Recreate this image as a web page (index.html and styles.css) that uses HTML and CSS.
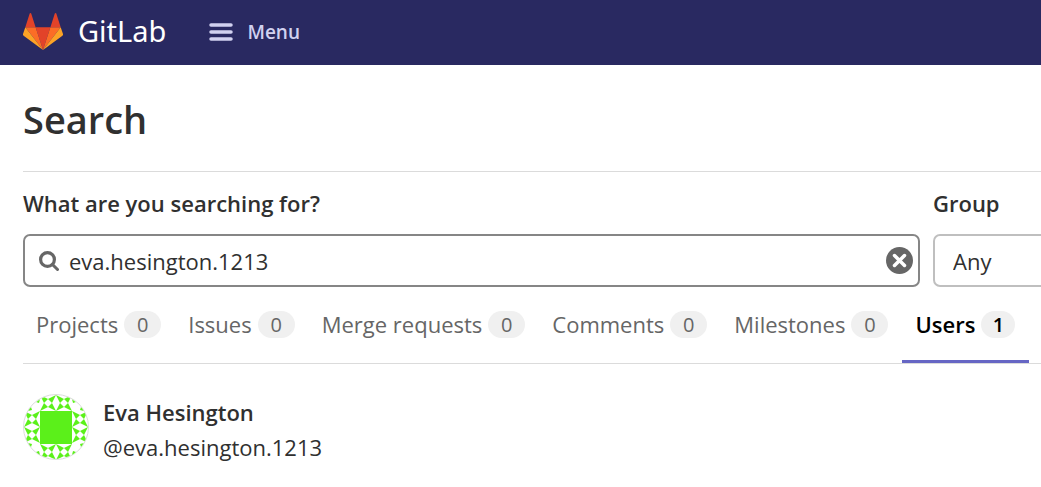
FILE: index.html
```html
<!DOCTYPE html>
<html lang="en">
<head>
<meta charset="utf-8">
<meta name="viewport" content="width=device-width, initial-scale=1">
<title>Search · GitLab</title>
<link rel="stylesheet" href="styles.css">
</head>
<body>
<header class="navbar">
  <a class="brand" href="#">
    <svg class="brand-logo" viewBox="0 0 40 37" aria-hidden="true">
      <path fill="#e24329" d="M20 37 27.400 14.200H12.600z"/>
      <path fill="#fc6d26" d="M20 37 12.600 14.200H2.300zM20 37 27.400 14.200H37.700z"/>
      <path fill="#fca326" d="M2.300 14.200 0 21.100a1.500 1.500 0 0 0 .6 1.700L20 37zM37.700 14.200 40 21.100a1.500 1.500 0 0 1-.6 1.700L20 37z"/>
      <path fill="#e24329" d="M2.300 14.200H12.600L8.200.6a.8.8 0 0 0-1.500 0zM37.700 14.200H27.400L31.800.6a.8.8 0 0 1 1.500 0z"/>
    </svg>
    <span class="brand-name">GitLab</span>
  </a>
  <button class="menu-button" type="button">
    <svg class="menu-icon" viewBox="0 0 24 18" aria-hidden="true">
      <path d="M2 2H22M2 9H22M2 16H22" stroke="currentColor" stroke-width="3.500" stroke-linecap="round"/>
    </svg>
    Menu
  </button>
</header>
<main class="content">
  <h1 class="page-title">Search</h1>
  <form class="search-form">
    <div class="field field-search">
      <label class="field-label" for="search">What are you searching for?</label>
      <div class="search-box">
        <svg class="search-icon" viewBox="0 0 20 20" aria-hidden="true">
          <circle cx="8.500" cy="8.500" r="6.900" fill="none" stroke="currentColor" stroke-width="3.200"/>
          <path d="m13.500 13.500 5 5" stroke="currentColor" stroke-width="3" stroke-linecap="round"/>
        </svg>
        <input class="search-input" id="search" type="text" value="eva.hesington.1213">
        <button class="clear-button" type="button" aria-label="Clear">
          <svg class="clear-icon" viewBox="0 0 27 27" aria-hidden="true">
            <circle cx="13.500" cy="13.500" r="13.500" fill="#666"/>
            <path d="m8.500 8.500 10 10m0-10-10 10" stroke="#fff" stroke-width="3.500" stroke-linecap="round"/>
          </svg>
        </button>
      </div>
    </div>
    <div class="field field-group">
      <label class="field-label" for="group">Group</label>
      <select class="group-select" id="group"><option>Any</option></select>
    </div>
  </form>
  <nav class="tabs" aria-label="Search results">
    <a class="tab" href="#">Projects <span class="badge">0</span></a>
    <a class="tab" href="#">Issues <span class="badge">0</span></a>
    <a class="tab" href="#">Merge requests <span class="badge">0</span></a>
    <a class="tab" href="#">Comments <span class="badge">0</span></a>
    <a class="tab" href="#">Milestones <span class="badge">0</span></a>
    <a class="tab tab-active" href="#" aria-current="page">Users <span class="badge">1</span></a>
  </nav>
  <section class="user">
    <svg class="avatar" viewBox="0 0 66 66" aria-hidden="true">
      <defs>
        <clipPath id="round"><circle cx="33" cy="33" r="32"/></clipPath>
        <path id="patch" d="M0 0 8 4 4 8zM16 0 12 8 8 4zM0 16 4 8 8 12zM16 16 8 12 12 8z"/>
      </defs>
      <circle cx="33" cy="33" r="32.500" fill="#fff" stroke="#dcdcdc"/>
      <g clip-path="url(#round)" fill="#5bf01a">
        <path d="M17 17h32v33H17z"/>
        <use href="#patch" x="17" y="1"/><use href="#patch" x="33" y="1"/>
        <use href="#patch" x="17" y="50"/><use href="#patch" x="33" y="50"/>
        <use href="#patch" x="1" y="17"/><use href="#patch" x="1" y="33"/>
        <use href="#patch" x="49" y="17"/><use href="#patch" x="49" y="33"/>
        <path id="spots" d="M13 5h4l-1 4-3-1zM5 13h3l1 3-4 1z"/>
        <use href="#spots" transform="matrix(-1 0 0 1 66 0)"/>
        <use href="#spots" transform="matrix(1 0 0 -1 0 66)"/>
        <use href="#spots" transform="matrix(-1 0 0 -1 66 66)"/>
      </g>
    </svg>
    <div class="user-info">
      <a class="user-name" href="#">Eva Hesington</a>
      <span class="user-handle">@eva.hesington.1213</span>
    </div>
  </section>
</main>
</body>
</html>
```
FILE: styles.css
```css
* { box-sizing: border-box; }
body {
  margin: 0;
  background: #fff;
  color: #303030;
  font: 22px/32px "Open Sans", "Noto Sans", sans-serif;
  overflow-x: hidden;
}
a { color: inherit; text-decoration: none; }
svg { display: block; flex: none; }
.navbar {
  display: flex;
  align-items: center;
  gap: 43px;
  height: 65px;
  padding: 0 23px 3px;
  background: #292961;
}
.brand { display: flex; align-items: center; gap: 15px; color: #fff; }
.brand-logo { width: 40px; height: 37px; }
.brand-name { font-size: 29px; font-family: "Noto Sans", sans-serif; }
.menu-button {
  display: flex;
  align-items: center;
  gap: 14px;
  padding: 2px 0 0;
  border: 0;
  background: none;
  color: #d1d1f0;
  font: 600 19px/32px "Open Sans", sans-serif;
}
.menu-icon { width: 24px; height: 18px; }
.content { padding-left: 23px; }
.page-title {
  margin: 0;
  padding: 28px 0 26px;
  border-bottom: 1px solid #dbdbdb;
  font-size: 38px;
  font-weight: 600;
  line-height: 52px;
}
.search-form { display: flex; gap: 13px; padding-top: 15px; }
.field { display: flex; flex-direction: column; gap: 15px; }
.field-search { flex: 1; }
.field-group { flex: 0 0 108px; overflow: hidden; }
.field-label { font-weight: 600; }
.search-box {
  display: flex;
  align-items: center;
  gap: 10px;
  height: 53px;
  padding: 0 5px 0 14px;
  border: 2px solid #868686;
  border-radius: 7px;
}
.search-icon { width: 20px; height: 20px; color: #666; }
.search-input {
  flex: 1;
  min-width: 0;
  padding: 0;
  border: 0;
  outline: 0;
  background: none;
  color: inherit;
  font: inherit;
}
.clear-button { padding: 0; border: 0; background: none; }
.clear-icon { width: 27px; height: 27px; }
.group-select {
  appearance: none;
  width: 240px;
  height: 53px;
  padding: 0 18px;
  border: 2px solid #bfbfbf;
  border-radius: 7px;
  background: #fff;
  color: inherit;
  font: inherit;
}
.tabs { display: flex; border-bottom: 1px solid #dbdbdb; }
.tab {
  display: flex;
  align-items: center;
  gap: 6px;
  height: 76px;
  padding: 1px 14px 0 13px;
  border-bottom: 3px solid transparent;
  color: #666;
  white-space: nowrap;
}
.tab-active {
  border-color: #6666c4;
  color: #000;
  font-weight: 600;
}
.badge {
  min-width: 37px;
  border-radius: 14px;
  background: #f0f0f0;
  font-size: 20px;
  line-height: 27px;
  text-align: center;
}
.tab-active .badge { min-width: 34px; }
.user { display: flex; align-items: flex-start; gap: 14px; padding-top: 30px; }
.avatar { width: 66px; height: 66px; }
.user-info { display: flex; flex-direction: column; padding-top: 1px; line-height: 35px; }
.user-name { font-weight: 600; }
```
